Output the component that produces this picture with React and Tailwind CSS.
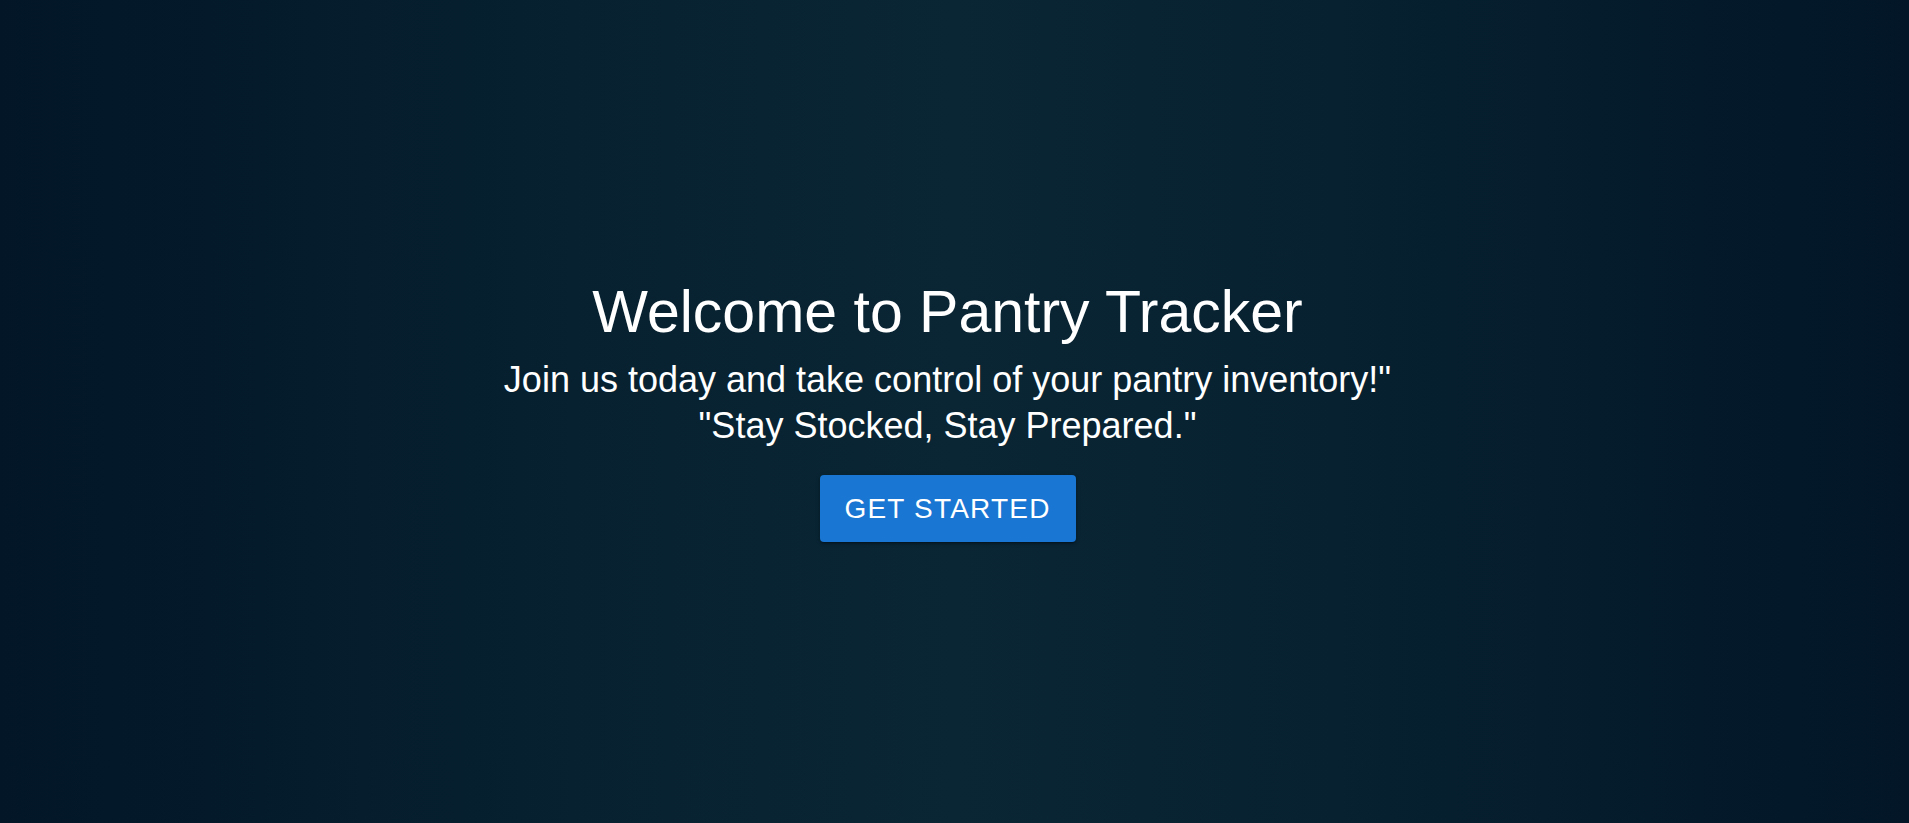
import React from "react";

export default function App() {
  return (
    <div
      className="min-h-screen w-full flex items-center justify-center bg-[linear-gradient(to_right,#021627_0%,#072130_30%,#0a2533_50%,#072130_70%,#021627_100%)] text-white pr-[14px] pb-[4px]"
      style={{ fontFamily: '"Liberation Sans", Arial, sans-serif' }}
    >
      <div className="flex flex-col items-center text-center">
        <h1 className="text-[59px] leading-[70px] font-normal">Welcome to Pantry Tracker</h1>
        <p className="mt-[10px] text-[36px] leading-[46px]">
          Join us today and take control of your pantry inventory!"
        </p>
        <p className="text-[36px] leading-[46px]">"Stay Stocked, Stay Prepared."</p>
        <button
          type="button"
          className="mt-[26px] h-[67px] w-[256px] flex items-center justify-center rounded-[4px] bg-[#1976d2] text-white text-[28px] leading-[49px] tracking-[1.2px] uppercase shadow-[0_3px_1px_-2px_rgba(0,0,0,0.2),0_2px_2px_0_rgba(0,0,0,0.14),0_1px_5px_0_rgba(0,0,0,0.12)]"
        >
          Get Started
        </button>
      </div>
    </div>
  );
}
